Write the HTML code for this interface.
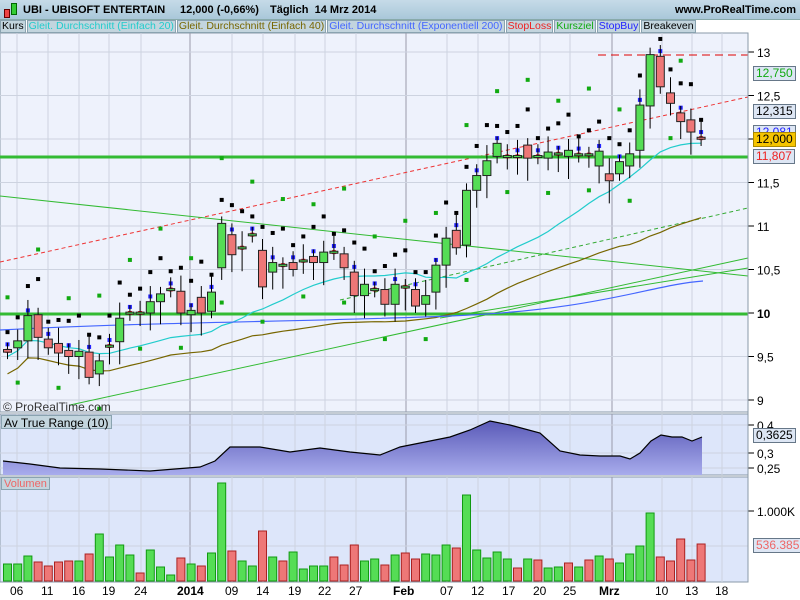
<!DOCTYPE html>
<html><head><meta charset="utf-8"><style>
*{margin:0;padding:0;box-sizing:border-box}
body{width:800px;height:600px;overflow:hidden;background:#fff;font-family:"Liberation Sans",sans-serif;position:relative}
#hdr{position:absolute;left:0;top:0;width:800px;height:20px;background:linear-gradient(#c6dbe8,#a9c7d9);border-bottom:1px solid #8aa;font-weight:bold;font-size:11px}
.t{position:absolute;white-space:nowrap}
#leg{position:absolute;top:20px;left:0;height:13px;font-size:10.5px;display:flex}
#leg span{background:#c3d5de;border:1px solid #8aa3b0;padding:0 1px;line-height:11px;height:13px;margin-right:1px}
svg{position:absolute;left:0;top:0}
.ax{font-size:12px;fill:#000}
.box{position:absolute;font-size:12px;border:1px solid #678;background:#dde6f4;padding:0 2px;line-height:13px;height:15px}
</style></head><body>
<svg id="s" width="800" height="600"></svg>
<div id="hdr">
<div class="t" style="left:4px;top:9px;width:6px;height:9px;background:#e44;border:1px solid #600"></div>
<div class="t" style="left:11px;top:3px;width:6px;height:12px;background:#3c3;border:1px solid #060"></div>
<div class="t" style="left:23px;top:4px">UBI - UBISOFT ENTERTAIN</div>
<div class="t" style="left:180px;top:4px">12,000 (-0,66%)</div>
<div class="t" style="left:270px;top:4px">Täglich&nbsp; 14 Mrz 2014</div>
<div class="t" style="left:675px;top:4px">www.ProRealTime.com</div>
</div>
<div id="leg"><span>Kurs</span><span style="color:#2cc">Gleit. Durchschnitt (Einfach 20)</span><span style="color:#776600">Gleit. Durchschnitt (Einfach 40)</span><span style="color:#46f">Gleit. Durchschnitt (Exponentiell 200)</span><span style="color:#e22">StopLoss</span><span style="color:#1a1">Kursziel</span><span style="color:#22f">StopBuy</span><span>Breakeven</span></div>
<div class="t" style="left:3px;top:400px;font-size:12px;color:#333">© ProRealTime.com</div>
<div class="t" style="left:1px;top:415px;font-size:12px;background:#c3d5de;border:1px solid #8aa3b0;padding:0 2px;height:14px">Av True Range (10)</div>
<div class="t" style="left:1px;top:477px;font-size:11px;color:#e66;background:#c3d5de;border:1px solid #8aa3b0;padding:0 2px;height:13px">Volumen</div>
<div class="box" style="left:753px;top:66px;color:#1a1">12,750</div>
<div class="box" style="left:753px;top:104px">12,315</div>
<div class="box" style="left:753px;top:125px;color:#22f;height:8px;overflow:hidden">12,081</div>
<div class="box" style="left:753px;top:132px;background:#f5c400;border-color:#a80">12,000</div>
<div class="box" style="left:753px;top:149px;color:#e22">11,807</div>
<div class="box" style="left:753px;top:428px">0,3625</div>
<div class="box" style="left:753px;top:538px;color:#e66">536.385</div>
<script>
var s=document.getElementById('s'),h='';
function r(x,y,w,hh,f,st){h+='<rect x="'+x+'" y="'+y+'" width="'+w+'" height="'+hh+'" fill="'+f+'"'+(st?' stroke="'+st+'"':'')+'/>';}
function l(x1,y1,x2,y2,c,w,d){h+='<line x1="'+x1+'" y1="'+y1+'" x2="'+x2+'" y2="'+y2+'" stroke="'+c+'" stroke-width="'+(w||1)+'"'+(d?' stroke-dasharray="'+d+'"':'')+'/>';}
function tx(x,y,t,b){h+='<text x="'+x+'" y="'+y+'" class="ax"'+(b?' font-weight="bold"':'')+'>'+t+'</text>';}
r(0,33,748,379,'#eef2fc','#8a9aa8');r(0,414,748,61,'#dde6fa','#8a9aa8');r(0,477,748,105,'#dde6fa','#8a9aa8');
var Y=function(p){return 52+(13-p)*87};
var gx=[17,48,79,109,141,190,232,263,295,325,356,406,447,478,509,540,570,612,662,692,722];
var lb=['06','11','16','19','24','2014','09','14','19','22','27','Feb','07','12','17','20','25','Mrz','10','13','18'];
gx.forEach(function(x,i){var c=(lb[i]=='2014'||lb[i]=='Feb'||lb[i]=='Mrz')?'#99a':'#cdd3e0';l(x,33,x,412,c);l(x,414,x,475,c);l(x,477,x,582,c);tx(lb[i].length>2?x-13:x-7,595,lb[i],lb[i].length>2);});
[13,12.5,12,11.5,11,10.5,10,9.5,9].forEach(function(p){var y=Y(p);l(0,y,748,y,'#cdd3e0');l(748,y,754,y,'#000');tx(757,y+5,String(p).replace('.',','),p==10);});
[[425,'0,4'],[453,'0,3'],[468,'0,25']].forEach(function(a){l(0,a[0],748,a[0],'#cdd3e0');l(748,a[0],754,a[0],'#000');tx(757,a[0]+5,a[1]);});
l(0,511,748,511,'#cdd3e0');l(748,511,754,511,'#000');tx(757,516,'1.000K');l(0,546,748,546,'#cdd3e0');
l(0,262,748,97,'#e33',1,'4,3');l(340,300,748,208,'#3a3',1,'4,3');
l(0,196,748,276,'#3b3');l(70,405,748,258,'#3b3');l(440,318,748,268,'#3b3');
l(0,157,748,157,'#3b3',3);l(0,314,748,314,'#3b3',3);l(598,55,748,55,'#d00',1,'8,5');
var D=[[9.58,9.55],[9.6,9.68],[9.68,9.97],[9.98,9.72],[9.7,9.6],[9.65,9.54],[9.57,9.5],[9.5,9.56],[9.55,9.26],[9.3,9.45],[9.61,9.63],[9.67,9.94],[9.99,10.01],[9.99,10.01],[10.0,10.13],[10.13,10.22],[10.26,10.28],[10.25,10.0],[9.98,10.03],[10.18,10.0],[10.02,10.24],[10.52,11.03],[10.9,10.67],[10.74,10.76],[10.89,10.91],[10.72,10.3],[10.47,10.58],[10.54,10.56],[10.58,10.5],[10.59,10.61],[10.65,10.58],[10.58,10.7],[10.69,10.71],[10.68,10.52],[10.47,10.2],[10.2,10.33],[10.26,10.28],[10.27,10.1],[10.1,10.33],[10.29,10.31],[10.27,10.08],[10.1,10.2],[10.24,10.55],[10.55,10.86],[10.95,10.75],[10.78,11.41],[11.41,11.58],[11.58,11.75],[11.8,11.95],[11.79,11.81],[11.79,11.81],[11.93,11.78],[11.79,11.81],[11.78,11.85],[11.82,11.84],[11.8,11.87],[11.81,11.83],[11.81,11.83],[11.69,11.86],[11.6,11.52],[11.6,11.74],[11.69,11.83],[11.87,12.39],[12.38,12.97],[12.95,12.6],[12.53,12.41],[12.3,12.2],[12.22,12.08],[12.02,12.0]];
var N=D.length,O=D.map(function(d){return d[0]}),C=D.map(function(d){return d[1]});
var X=function(i){return 7.5+i*10.2};
function ma(n,k,col){var p='';for(var i=0;i<N;i++){var j=Math.max(0,i-n+1),s2=0;for(var q=j;q<=i;q++)s2+=C[q];var v=s2/(i-j+1)-k;p+=(i?'L':'M')+X(i).toFixed(1)+','+Y(v).toFixed(1);}h+='<path d="'+p+'" fill="none" stroke="'+col+'" stroke-width="1.2"/>';}
ma(20,0.05,'#2cc');ma(40,0.25,'#776600');
h+='<path d="M0,330 C150,322 300,322 450,316 S650,285 703,281" fill="none" stroke="#46f" stroke-width="1.2"/>';
for(var i=0;i<N;i++){var x=X(i),hi=Math.max(O[i],C[i]),lo=Math.min(O[i],C[i]);
r(x-2,Y(hi+0.2+(i%4)*0.07)-2,4,4,'#000');if(i%3==0)r(x-2,Y(hi+0.6+(i%2)*0.15)-2,4,4,'#1a1');
if(i%2==0)r(x-2,Y(hi+0.06)-2,4,4,'#22f');r(x-2,Y((hi+lo)/2)-2,4,4,'#e11');if(i%4==1)r(x-2,Y(lo-0.4)-2,4,4,'#1a1');}
for(var i=0;i<N;i++){var x=X(i),hi=Math.max(O[i],C[i]),lo=Math.min(O[i],C[i]),up=C[i]>=O[i];
l(x,Y(hi+0.08+(i%3)*0.05),x,Y(lo-0.08-(i%4)*0.06),'#000');
var yy=Y(hi),hh=Math.max(2,Y(lo)-yy);r(x-4,yy,8,hh,up?'#5d5':'#e77','#222');}
var AT=[[3,461],[30,464],[60,468],[100,469],[150,471],[200,467],[215,461],[230,447],[260,447],[290,452],[320,448],[350,452],[380,455],[400,447],[420,443],[450,437],[470,430],[490,421],[510,425],[540,433],[560,451],[580,455],[600,456],[620,456],[630,459],[640,453],[651,441],[661,435],[672,437],[682,437],[692,441],[702,437]];
var p=AT.map(function(a,i){return (i?'L':'M')+a[0]+','+a[1]}).join('');
h+='<defs><linearGradient id="g" x1="0" y1="0" x2="0" y2="1"><stop offset="0" stop-color="#5a5ab8"/><stop offset="1" stop-color="#a8acec"/></linearGradient></defs>';
h+='<path d="'+p+'L702,475L3,475Z" fill="url(#g)"/><path d="'+p+'" fill="none" stroke="#000" stroke-width="1.2"/>';
var VT=[564,564,556,562,566,562,561,561,554,534,557,545,555,573,550,567,575,558,564,566,553,483,551,561,566,531,557,561,552,569,566,566,557,565,545,561,559,565,555,553,559,554,555,545,548,495,550,558,552,559,568,559,560,568,567,563,567,560,556,559,563,554,546,513,557,561,539,560,544];
var VC=['g','g','g','r','r','r','r','g','r','g','g','g','g','r','g','g','g','r','g','r','g','g','r','g','g',
'r','g','r','g','g','g','g','r','r','r','g','g','r','g','r','r','g','g','g','r','g','g','g','g','g','r','g','r','g','g','r','g','r','g','r','g','g','g','g','r','r','r','r','r'];
for(var i=0;i<N;i++){var up=VC[i]=='g';r(X(i)-4,VT[i],8,581-VT[i],up?'#5d5':'#e77',up?'#191':'#a22');}
l(748,33,748,582,'#8a9aa8');
s.innerHTML=h;
</script>
</body></html>
